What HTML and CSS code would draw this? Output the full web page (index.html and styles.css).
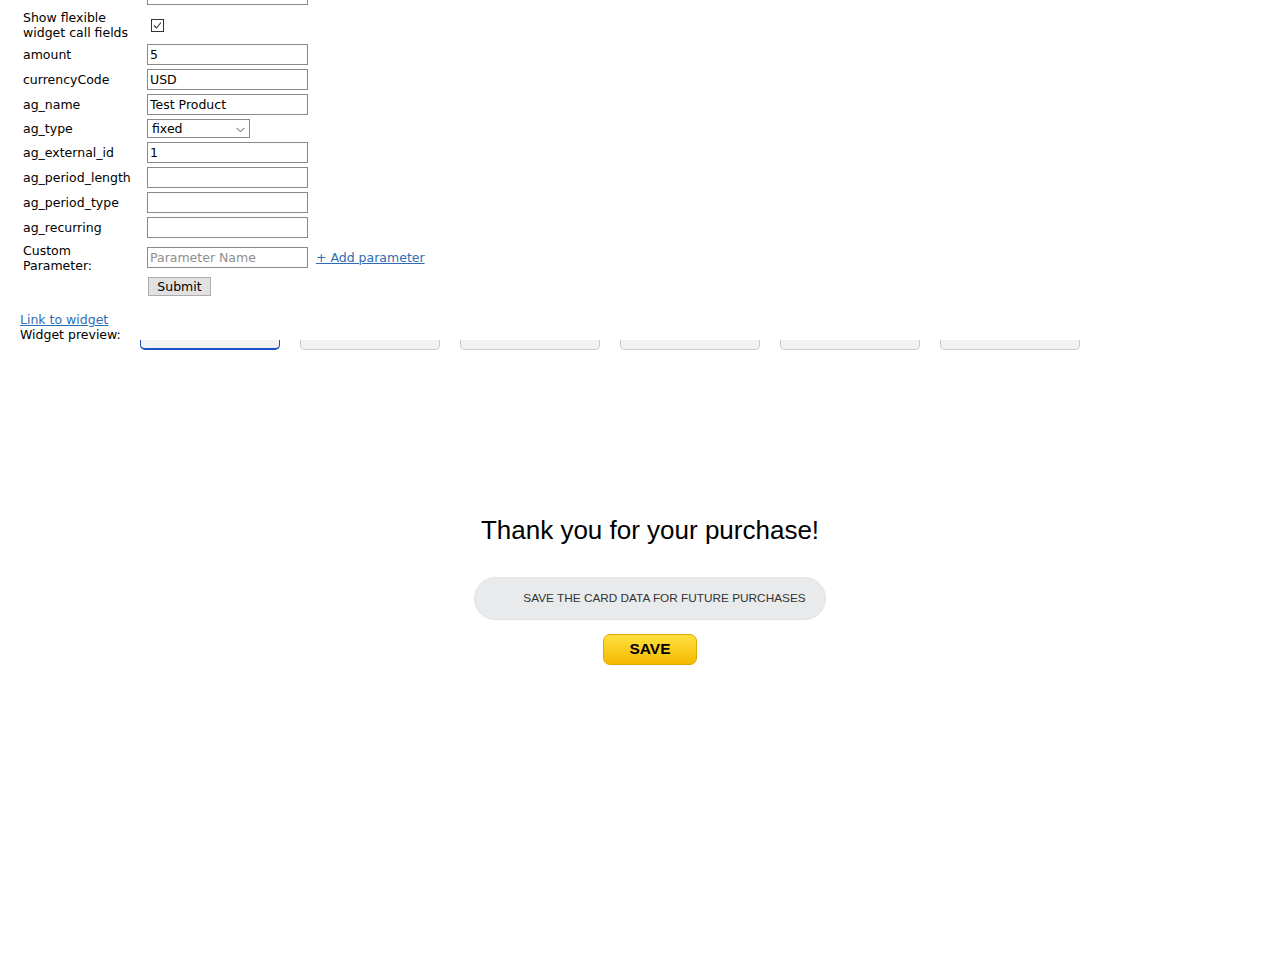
FILE: index.html
```html
<!DOCTYPE html>
<html>
<head>
<meta charset="utf-8">
<title>Widget preview</title>
<link rel="stylesheet" href="styles.css">
</head>
<body>
<div class="page">
  <div class="form">
    <div class="row"><span class="lbl"></span><input class="txt" type="text"></div>
    <div class="row tall"><span class="lbl">Show flexible<br>widget call fields</span><span class="check"><svg width="11" height="11" viewBox="0 0 11 11"><path d="M2 5.5 L4.5 8 L9 2.5" fill="none" stroke="#333" stroke-width="1.1"/></svg></span></div>
    <div class="row"><span class="lbl">amount</span><input class="txt" type="text" value="5"></div>
    <div class="row"><span class="lbl">currencyCode</span><input class="txt" type="text" value="USD"></div>
    <div class="row"><span class="lbl">ag_name</span><input class="txt" type="text" value="Test Product"></div>
    <div class="row short"><span class="lbl">ag_type</span><span class="select"><span class="sel-val">fixed</span><svg class="chev" width="9" height="6" viewBox="0 0 9 6"><path d="M0.5 0.8 L4.5 4.8 L8.5 0.8" fill="none" stroke="#555" stroke-width="1"/></svg></span></div>
    <div class="row"><span class="lbl">ag_external_id</span><input class="txt" type="text" value="1"></div>
    <div class="row"><span class="lbl">ag_period_length</span><input class="txt" type="text"></div>
    <div class="row"><span class="lbl">ag_period_type</span><input class="txt" type="text"></div>
    <div class="row"><span class="lbl">ag_recurring</span><input class="txt" type="text"></div>
    <div class="row tall"><span class="lbl">Custom<br>Parameter:</span><input class="txt" type="text" placeholder="Parameter Name"><a class="add" href="#">+ Add parameter</a></div>
    <div class="row short"><span class="lbl"></span><button class="submit" type="button">Submit</button></div>
  </div>
  <div class="links">
    <a class="link" href="#">Link to widget</a><br>
    <span>Widget preview:</span>
  </div>
  <div class="tabs">
    <div class="tab active"></div>
    <div class="tab"></div>
    <div class="tab"></div>
    <div class="tab"></div>
    <div class="tab"></div>
    <div class="tab"></div>
  </div>
  <div class="widget">
    <h1 class="thanks">Thank you for your purchase!</h1>
    <div class="pill">SAVE THE CARD DATA FOR FUTURE PURCHASES</div>
    <button class="save" type="button">SAVE</button>
  </div>
</div>
</body>
</html>
```
FILE: styles.css
```css
html, body {
  background: #fff;
}
body {
  margin: 0 8px;
  font-family: "DejaVu Sans", Verdana, sans-serif;
  font-size: 12.5px;
  line-height: 15px;
  color: #000;
}
.page {
  padding: 8px 0 0 12px;
}
.form {
  margin-top: -24px;
  display: flex;
  flex-direction: column;
  gap: 4px;
  padding-left: 3px;
}
.row {
  display: flex;
  align-items: center;
  height: 21px;
}
.row.tall {
  height: 31px;
}
.row.short {
  height: 19px;
}
.lbl {
  width: 124px;
  flex: none;
}
.txt {
  box-sizing: border-box;
  width: 161px;
  height: 21px;
  margin: 0;
  border: 1px solid #8a8a8a;
  padding: 0 2px;
  font-family: "DejaVu Sans", Verdana, sans-serif;
  font-size: 12.5px;
  color: #000;
  background: #fff;
  outline: none;
}
.txt::placeholder {
  color: #8f8f8f;
}
.check {
  box-sizing: border-box;
  width: 13px;
  height: 13px;
  margin: 1px 0 0 4px;
  border: 1px solid #333;
  display: flex;
  align-items: center;
  justify-content: center;
}
.select {
  box-sizing: border-box;
  width: 103px;
  height: 19px;
  border: 1px solid #8a8a8a;
  display: flex;
  align-items: center;
  justify-content: space-between;
  padding: 0 4px 0 4px;
}
.chev {
  margin-top: 2px;
}
.add {
  margin-left: 8px;
  color: #2e6db4;
  text-decoration: underline;
}
.submit {
  box-sizing: border-box;
  margin-left: 1px;
  width: 63px;
  height: 19px;
  padding: 0;
  border: 1px solid #adadad;
  background: #e1e1e1;
  font-family: "DejaVu Sans", Verdana, sans-serif;
  font-size: 12.5px;
  color: #000;
}
.links {
  margin-top: 16px;
}
.link {
  color: #2e6db4;
  text-decoration: underline;
}
.tabs {
  display: flex;
  gap: 20px;
  margin: -2px 0 0 120px;
}
.tab {
  box-sizing: border-box;
  width: 140px;
  height: 10px;
  background: #f2f2f2;
  border: 1px solid #cbcbcb;
  border-top: none;
  border-radius: 0 0 5px 5px;
}
.tab.active {
  border-color: #1a4fc6;
  border-bottom-width: 2px;
}
.widget {
  margin-left: 120px;
  width: 1020px;
  display: flex;
  flex-direction: column;
  align-items: center;
  font-family: "Liberation Sans", Arial, sans-serif;
}
.thanks {
  margin: 165px 0 0;
  font-size: 26px;
  line-height: 30px;
  font-weight: normal;
  color: #000;
}
.pill {
  margin-top: 32px;
  box-sizing: border-box;
  height: 43px;
  border: 1px solid #e0e2e3;
  border-radius: 22px;
  background: #e8eaeb;
  padding: 0 19px 0 48px;
  display: flex;
  align-items: center;
  font-size: 11.8px;
  color: #333;
  white-space: nowrap;
}
.save {
  margin-top: 14px;
  box-sizing: border-box;
  width: 94px;
  height: 31px;
  padding: 0 0 2px;
  border: 1px solid #e2a900;
  border-radius: 7px;
  background: linear-gradient(#ffe03f, #f4b900);
  font-family: "Liberation Sans", Arial, sans-serif;
  font-size: 15.5px;
  font-weight: bold;
  color: #000;
}
```
